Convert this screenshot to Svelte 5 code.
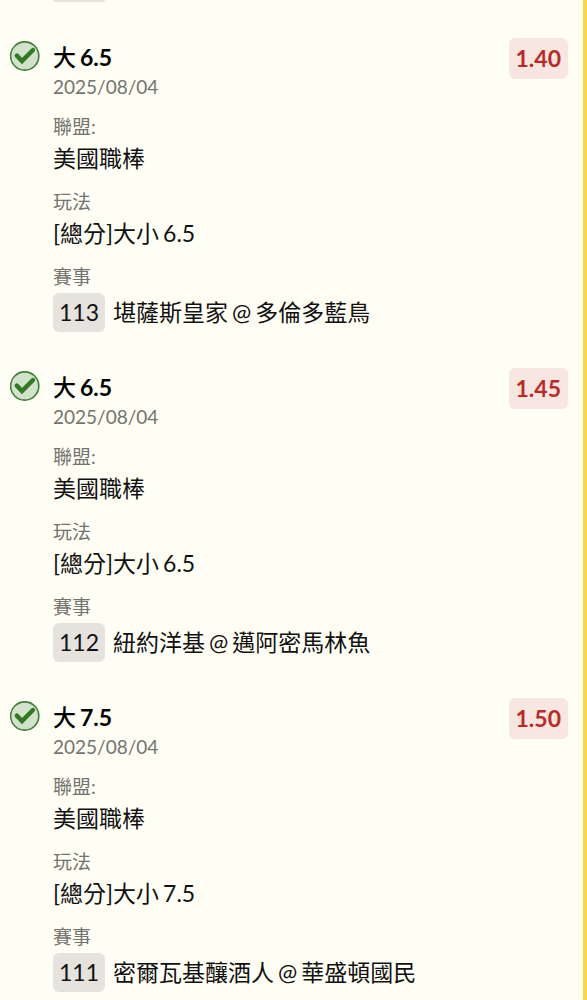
<script lang="ts">
	type Bet = {
		side: string;
		line: string;
		date: string;
		league: string;
		play: string;
		matchNo: string;
		away: string;
		home: string;
		odds: string;
	};

	const bets: Bet[] = [
		{
			side: '大',
			line: '6.5',
			date: '2025/08/04',
			league: '美國職棒',
			play: '[總分]大小',
			matchNo: '113',
			away: '堪薩斯皇家',
			home: '多倫多藍鳥',
			odds: '1.40'
		},
		{
			side: '大',
			line: '6.5',
			date: '2025/08/04',
			league: '美國職棒',
			play: '[總分]大小',
			matchNo: '112',
			away: '紐約洋基',
			home: '邁阿密馬林魚',
			odds: '1.45'
		},
		{
			side: '大',
			line: '7.5',
			date: '2025/08/04',
			league: '美國職棒',
			play: '[總分]大小',
			matchNo: '111',
			away: '密爾瓦基釀酒人',
			home: '華盛頓國民',
			odds: '1.50'
		}
	];
</script>

<main class="slip">
	<!-- Bottom edge of the match number above the first bet -->
	<div class="previous" aria-hidden="true"></div>

	<ul class="bets">
		{#each bets as bet (bet.matchNo)}
			<li class="bet">
				<svg class="status" viewBox="0 0 30 30" aria-hidden="true">
					<circle cx="14.7" cy="15" r="14.1" />
					<path d="M6.8 14.6 L12 20 L23 9" />
				</svg>

				<div class="details">
					<h2 class="words">
						<span class="side">{bet.side}</span>
						<span>{bet.line}</span>
					</h2>
					<time datetime={bet.date.replaceAll('/', '-')}>{bet.date}</time>
					<dl>
						<div class="field">
							<dt>聯盟:</dt>
							<dd>{bet.league}</dd>
						</div>
						<div class="field">
							<dt>玩法</dt>
							<dd class="words">
								<span>{bet.play}</span>
								<span>{bet.line}</span>
							</dd>
						</div>
						<div class="field">
							<dt>賽事</dt>
							<dd class="match">
								<span class="match-no">{bet.matchNo}</span>
								<span class="words">
									<span>{bet.away}</span>
									<span>@</span>
									<span>{bet.home}</span>
								</span>
							</dd>
						</div>
					</dl>
				</div>

				<span class="odds">{bet.odds}</span>
			</li>
		{/each}
	</ul>
</main>

<style>
	:global(body) {
		background-color: #fffef5;
	}

	.slip {
		box-sizing: border-box;
		min-height: 100vh;
		padding: 0 15px 8px 10px;
		border-right: 4px solid #fbd83f;
		background-color: #fffef5;
		color: #111;
		font-family: Lato, 'Noto Sans CJK TC', sans-serif;
		font-size: 23px;
		line-height: 35px;
	}

	.previous {
		width: 52px;
		height: 2px;
		margin-left: 43px;
		border-radius: 0 0 6px 6px;
		background-color: #e6e3de;
	}

	.bets {
		display: flex;
		flex-direction: column;
		gap: 36px;
		margin: 0;
		padding: 36px 0 0;
		list-style: none;
	}

	.bet {
		display: flex;
		align-items: flex-start;
	}

	.status {
		flex-shrink: 0;
		width: 30px;
		height: 30px;
		margin: 3px 13px 0 0;
	}

	.status circle {
		fill: #d3e2ca;
		stroke: #3f7d39;
		stroke-width: 1.6;
	}

	.status path {
		fill: none;
		stroke: #2f7a22;
		stroke-width: 4.4;
		stroke-linecap: round;
	}

	.details {
		flex: 1;
		min-width: 0;
		padding-top: 3px;
	}

	.words {
		display: flex;
		flex-wrap: wrap;
		column-gap: 4px;
	}

	h2 {
		margin: 0;
		color: #000;
		font-size: 23px;
		font-weight: 700;
		line-height: 32px;
	}

	.side {
		font-weight: 500;
	}

	time,
	dt {
		display: block;
		color: #737370;
		font-size: 19px;
		line-height: 28px;
	}

	dl,
	dd {
		margin: 0;
	}

	.field {
		margin-top: 12px;
	}

	.match {
		display: flex;
		align-items: center;
		gap: 8px;
		margin-top: 2px;
	}

	.match-no {
		flex-shrink: 0;
		padding: 2px 6px;
		border-radius: 6px;
		background-color: #e6e3de;
	}

	.odds {
		flex-shrink: 0;
		padding: 3px 7px;
		border-radius: 6px;
		background-color: #f8e6e1;
		color: #bb2a26;
		font-weight: 700;
	}
</style>
